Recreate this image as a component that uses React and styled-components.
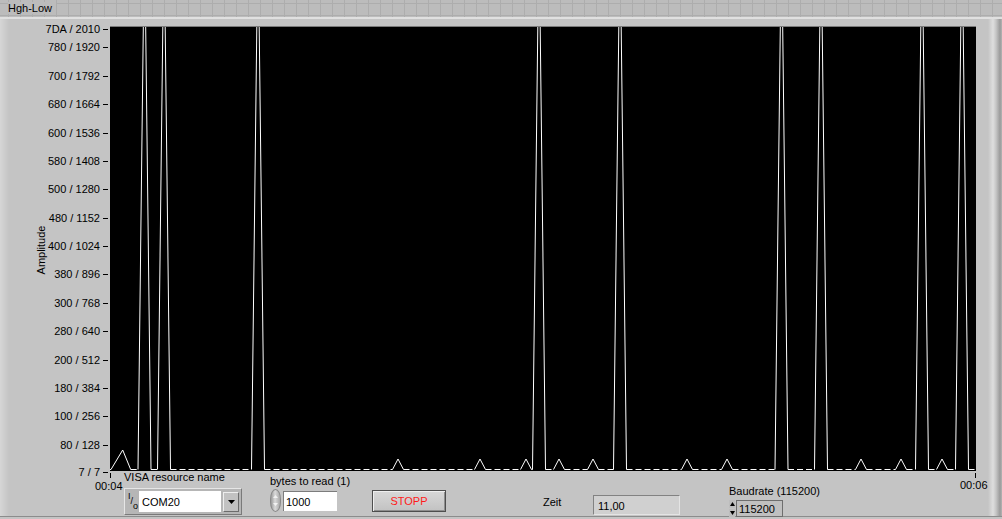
import React from "react";
import styled, { createGlobalStyle } from "styled-components";

const GlobalStyle = createGlobalStyle`
  html, body { margin: 0; padding: 0; }
  body {
    background: #c4c4c4;
    font-family: "Liberation Sans", Arial, sans-serif;
    font-size: 11px;
    color: #000;
    overflow: hidden;
  }
`;

const Page = styled.div`
  width: 1002px;
  height: 519px;
  display: flex;
  flex-direction: column;
`;

const Header = styled.div`
  height: 17px;
  line-height: 17px;
  padding-left: 8px;
  background-color: #bcbcbc;
  background-image: linear-gradient(#adadad 1px, transparent 1px),
    linear-gradient(90deg, #adadad 1px, transparent 1px);
  background-size: 12px 12px;
  background-position: 8px 3px;
`;

const Title = styled.span`
  background: #bcbcbc;
  padding-right: 4px;
`;

const Panel = styled.div`
  flex: 1;
  box-sizing: border-box;
  border-top: 2px solid #e0e0e0;
  display: flex;
  flex-direction: column;
  background: linear-gradient(
    90deg,
    #d6d6d6 0px,
    #c4c4c4 9px,
    #c4c4c4 988px,
    #dedede 993px,
    #c6c6c6 996px,
    #9a9a9a 1000px,
    #b4b4b4 1002px
  );
  box-shadow: inset 0 -2px 0 #c4c4c4, inset 0 -3px 0 #8c8c8c;
`;

const Chart = styled.svg`
  display: block;
  overflow: visible;
  font-family: "Liberation Sans", Arial, sans-serif;
  font-size: 11px;
`;

const Controls = styled.div`
  display: flex;
  align-items: flex-start;
  height: 46px;
`;

const Slot = styled.div`
  margin-left: ${(p) => p.$left}px;
  margin-top: ${(p) => p.$top}px;
  width: ${(p) => p.$w}px;
  flex: none;
  display: flex;
  flex-direction: column;
  white-space: nowrap;
`;

const Label = styled.div`
  line-height: 13px;
  margin-bottom: ${(p) => p.$gap || 0}px;
`;

const Row = styled.div`
  display: flex;
  align-items: center;
`;

const VisaBox = styled.div`
  display: flex;
  align-items: center;
  height: 27px;
  box-sizing: border-box;
  padding: 0 2px 0 3px;
  background: #b6b6b6;
  border-top: 1px solid #e6e6e6;
  border-left: 1px solid #e6e6e6;
  border-right: 1px solid #7a7a7a;
  border-bottom: 1px solid #7a7a7a;
`;

const IoGlyph = styled.span`
  display: flex;
  width: 10px;
  height: 19px;
  font-size: 9px;
  line-height: 9px;
  margin-right: 1px;
`;

const IoPart = styled.span`
  align-self: ${(p) => p.$align};
`;

const WhiteField = styled.div`
  background: #fff;
  width: ${(p) => p.$w}px;
  height: ${(p) => p.$h}px;
  line-height: ${(p) => p.$h}px;
  padding-left: 2px;
  box-sizing: border-box;
  border-top: 1px solid ${(p) => (p.$inset ? "#7c7c7c" : "#fff")};
  border-left: 1px solid ${(p) => (p.$inset ? "#7c7c7c" : "#fff")};
`;

const DropButton = styled.div`
  width: 16px;
  height: 20px;
  margin-left: 2px;
  box-sizing: border-box;
  background: #c2c2c2;
  border-top: 1px solid #eeeeee;
  border-left: 1px solid #eeeeee;
  border-right: 1px solid #6c6c6c;
  border-bottom: 1px solid #6c6c6c;
  display: flex;
  align-items: center;
  justify-content: center;
`;

const Spinner = styled.div`
  width: 11px;
  height: 23px;
  margin-right: 2px;
  border-radius: 6px / 11px;
  background: linear-gradient(90deg, #9a9a9a, #dadada 45%, #a8a8a8);
  border: 1px solid #8a8a8a;
  box-sizing: border-box;
  display: flex;
  flex-direction: column;
  align-items: center;
  justify-content: space-evenly;
`;

const StopButton = styled.button`
  width: 74px;
  height: 22px;
  padding: 0;
  box-sizing: border-box;
  font-family: "Liberation Sans", Arial, sans-serif;
  font-size: 11px;
  color: #ff1a1a;
  background: linear-gradient(#d8d8d8, #c2c2c2);
  border: 1px solid #4e4e4e;
  box-shadow: inset 1px 1px 0 #efefef, inset -1px -1px 0 #8e8e8e;
`;

const Indicator = styled.div`
  width: 87px;
  height: 20px;
  line-height: 20px;
  padding-left: 4px;
  box-sizing: border-box;
  background: #d0d0d0;
  border-top: 1px solid #828282;
  border-left: 1px solid #828282;
  border-right: 1px solid #e4e4e4;
  border-bottom: 1px solid #e4e4e4;
`;

const BaudArrows = styled.div`
  width: 6px;
  height: 17px;
  margin-right: 1px;
  display: flex;
  flex-direction: column;
  justify-content: space-between;
`;

const ArrowCell = styled.div`
  height: 8px;
  background: #bdbdbd;
  display: flex;
  align-items: center;
  justify-content: center;
`;

const BaudField = styled.div`
  width: 47px;
  height: 17px;
  line-height: 17px;
  padding-left: 2px;
  box-sizing: border-box;
  background: #c0c0c0;
  border: 1px solid #6e6e6e;
`;

// chart geometry in page coordinates
const PX0 = 110;
const PX1 = 976;
const PY0 = 27;
const PY1 = 471;
const BASE = 469.5;

const yLabels = [
  "80 / 128",
  "100 / 256",
  "180 / 384",
  "200 / 512",
  "280 / 640",
  "300 / 768",
  "380 / 896",
  "400 / 1024",
  "480 / 1152",
  "500 / 1280",
  "580 / 1408",
  "600 / 1536",
  "680 / 1664",
  "700 / 1792",
  "780 / 1920",
];

const ticks = [
  { t: "7 / 7", y: 472 },
  ...yLabels.map((t, i) => ({ t, y: 473 - 28.37 * (i + 1) })),
  { t: "7DA / 2010", y: 29 },
];

const pulses = [144.5, 164, 258, 539, 620, 781.5, 821, 922, 962];
const bumps = [398, 480, 526, 559, 593, 687, 727, 861, 901, 942];

const features = [
  { l: 111, c: 122.7, r: 130.7, top: 450 },
  ...pulses.map((c) => ({ l: c - 6.5, c, r: c + 6.5, top: -73 })),
  ...bumps.map((c) => ({ l: c - 5.5, c, r: c + 5.5, top: 459 })),
].sort((a, b) => a.c - b.c);

function Trace() {
  const gaps = [];
  let prev = PX0;
  features.forEach((f) => {
    if (f.l > prev) gaps.push([prev, f.l]);
    prev = f.r;
  });
  if (prev < PX1) gaps.push([prev, PX1]);
  return (
    <g clipPath="url(#plotclip)" stroke="#fff" fill="none" strokeWidth="1">
      {gaps.map(([a, b], i) => (
        <line key={"g" + i} x1={a} y1={BASE} x2={b} y2={BASE} strokeDasharray="6 3" />
      ))}
      {features.map((f, i) => (
        <polyline key={"f" + i} points={`${f.l},${BASE} ${f.c},${f.top} ${f.r},${BASE}`} />
      ))}
    </g>
  );
}

function Graph() {
  return (
    <Chart width="1002" height="451" viewBox="0 19 1002 451">
      <defs>
        <clipPath id="plotclip">
          <rect x={PX0} y={PY0} width={PX1 - PX0} height={PY1 - PY0} />
        </clipPath>
      </defs>
      <line x1={PX0} y1={PY0 - 0.5} x2={PX1} y2={PY0 - 0.5} stroke="#7a7a7a" />
      <rect x={PX0} y={PY0} width={PX1 - PX0} height={PY1 - PY0} fill="#000" />
      <Trace />
      {ticks.map((k) => (
        <g key={k.t}>
          <text x="100" y={k.y} textAnchor="end" dominantBaseline="central" fill="#000">
            {k.t}
          </text>
          <line x1="103" y1={Math.round(k.y) + 0.5} x2="108" y2={Math.round(k.y) + 0.5} stroke="#000" />
        </g>
      ))}
      <text
        x="0"
        y="0"
        transform="translate(41 250) rotate(-90)"
        textAnchor="middle"
        dominantBaseline="central"
        fill="#000"
      >
        Amplitude
      </text>
      <line x1="110.5" y1="473" x2="110.5" y2="478" stroke="#000" />
      <line x1="975.5" y1="473" x2="975.5" y2="478" stroke="#000" />
    </Chart>
  );
}

function Tri({ up, color = "#000", w = 7, h = 4 }) {
  return (
    <svg width={w} height={h} viewBox={`0 0 ${w} ${h}`}>
      <polygon points={up ? `0,${h} ${w / 2},0 ${w},${h}` : `0,0 ${w},0 ${w / 2},${h}`} fill={color} />
    </svg>
  );
}

export default function App() {
  return (
    <Page>
      <GlobalStyle />
      <Header>
        <Title>Hgh-Low</Title>
      </Header>
      <Panel>
        <Graph />
        <Controls>
          <Slot $left={95} $top={10} $w={29}>
            00:04
          </Slot>
          <Slot $left={0} $top={1} $w={118}>
            <Label $gap={4}>VISA resource name</Label>
            <VisaBox>
              <IoGlyph>
                <IoPart $align="flex-start">I</IoPart>
                <IoPart $align="center">/</IoPart>
                <IoPart $align="flex-end">o</IoPart>
              </IoGlyph>
              <WhiteField $w={85} $h={21}>COM20</WhiteField>
              <DropButton>
                <Tri />
              </DropButton>
            </VisaBox>
          </Slot>
          <Slot $left={28} $top={5} $w={82}>
            <Label $gap={1}>bytes to read (1)</Label>
            <Row>
              <Spinner>
                <Tri up color="#f2f2f2" w={5} h={3} />
                <Tri color="#f2f2f2" w={5} h={3} />
              </Spinner>
              <WhiteField $w={54} $h={20} $inset>
                1000
              </WhiteField>
            </Row>
          </Slot>
          <Slot $left={20} $top={20} $w={74}>
            <StopButton>STOPP</StopButton>
          </Slot>
          <Slot $left={97} $top={26} $w={20}>
            Zeit
          </Slot>
          <Slot $left={30} $top={25} $w={87}>
            <Indicator>11,00</Indicator>
          </Slot>
          <Slot $left={49} $top={15} $w={92}>
            <Label $gap={2}>Baudrate (115200)</Label>
            <Row>
              <BaudArrows>
                <ArrowCell>
                  <Tri up w={5} h={4} />
                </ArrowCell>
                <ArrowCell>
                  <Tri w={5} h={4} />
                </ArrowCell>
              </BaudArrows>
              <BaudField>115200</BaudField>
            </Row>
          </Slot>
          <Slot $left={139} $top={9} $w={30}>
            00:06
          </Slot>
        </Controls>
      </Panel>
    </Page>
  );
}
